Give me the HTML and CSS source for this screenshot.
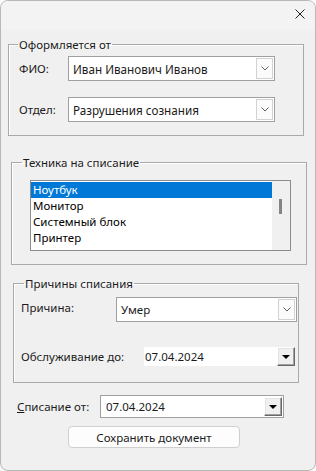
FILE: index.html
```html
<!DOCTYPE html>
<html lang="ru">
  <head>
    <meta charset="utf-8">
    <title>Списание техники</title>
    <link rel="stylesheet" href="styles.css">
  </head>
  <body>
    <div class="window">
      <div class="titlebar">
        <span class="close">
          <svg width="10" height="10" viewBox="0 0 10 10"><path d="M0.5 0.5 L9.5 9.5 M9.5 0.5 L0.5 9.5" stroke="#1f1f1f" stroke-width="1" fill="none"/></svg>
        </span>
      </div>

      <fieldset class="group group-owner">
        <legend>Оформляется от</legend>
        <div class="row">
          <label class="lbl lbl-owner">ФИО:</label>
          <div class="combo combo-owner">
            <span class="combo-text">Иван Иванович Иванов</span>
            <span class="combo-btn"><svg width="8" height="5" viewBox="0 0 8 5"><path d="M0.5 0.5 L4 4 L7.5 0.5" stroke="#606060" fill="none"/></svg></span>
          </div>
        </div>
        <div class="row row-gap">
          <label class="lbl lbl-owner">Отдел:</label>
          <div class="combo combo-owner">
            <span class="combo-text">Разрушения сознания</span>
            <span class="combo-btn"><svg width="8" height="5" viewBox="0 0 8 5"><path d="M0.5 0.5 L4 4 L7.5 0.5" stroke="#606060" fill="none"/></svg></span>
          </div>
        </div>
      </fieldset>

      <fieldset class="group group-items">
        <legend>Техника на списание</legend>
        <div class="listbox">
          <ul class="list">
            <li class="selected">Ноутбук</li>
            <li>Монитор</li>
            <li>Системный блок</li>
            <li>Принтер</li>
          </ul>
          <div class="scroll"><span class="thumb"></span></div>
        </div>
      </fieldset>

      <fieldset class="group group-reason">
        <legend>Причины списания</legend>
        <div class="row row-top">
          <label class="lbl lbl-reason">Причина:</label>
          <div class="combo combo-reason">
            <span class="combo-text">Умер</span>
            <span class="combo-btn"><svg width="8" height="5" viewBox="0 0 8 5"><path d="M0.5 0.5 L4 4 L7.5 0.5" stroke="#606060" fill="none"/></svg></span>
          </div>
        </div>
        <div class="row row-service">
          <label class="lbl lbl-service">Обслуживание до:</label>
          <div class="date date-flat">
            <span class="date-text">07.04.2024</span>
            <span class="date-btn"><span class="tri"></span></span>
          </div>
        </div>
      </fieldset>

      <div class="row row-writeoff">
        <label class="lbl lbl-writeoff"><u>С</u>писание от:</label>
        <div class="date date-boxed">
          <span class="date-text">07.04.2024</span>
          <span class="date-btn"><span class="tri"></span></span>
        </div>
      </div>

      <button class="save">Сохранить <u>д</u>окумент</button>
    </div>
  </body>
</html>
```

FILE: styles.css
```css
html, body {
  margin: 0;
  padding: 0;
}
body {
  background: #fafafa;
  font-family: "Noto Sans", "Liberation Sans", sans-serif;
  font-size: 11.5px;
  color: #1b1b1b;
}
.window {
  box-sizing: border-box;
  width: 316px;
  height: 471px;
  border: 1px solid #b8b8b8;
  border-radius: 8px;
  background: #f0f0f0;
  overflow: hidden;
}
.titlebar {
  height: 29px;
  background: #f3f3f3;
  display: flex;
  justify-content: flex-end;
  align-items: flex-start;
  padding-right: 10px;
}
.close {
  display: block;
  margin-top: 8px;
  height: 10px;
}
.close svg {
  display: block;
}

/* group boxes */
.group {
  box-sizing: border-box;
  margin: 0;
  border: 1px solid #a9a9a9;
  box-shadow: inset 1px 1px #ffffff;
  min-width: 0;
}
.group legend {
  line-height: 17px;
  padding: 0 1px;
  color: #1b1b1b;
}
.group-owner {
  margin: 6px 0 0 7px;
  width: 296px;
  padding: 3px 10px 13px 10px;
}
.group-owner legend {
  margin-left: -1px;
}
.group-items {
  margin: 18px 0 0 10px;
  width: 296px;
  padding: 9px 10px 13px 10px;
}
.group-reason {
  margin: 10px 0 0 12px;
  width: 286px;
  padding: 5px 1px 16px 7px;
}
.group-reason legend {
  margin-left: 3px;
}

.row {
  display: flex;
  align-items: center;
}
.row-gap {
  margin-top: 16px;
}
.row-top {
  align-items: flex-start;
}
.row-service {
  margin-top: 25px;
}
.lbl {
  flex: none;
}
.lbl-owner {
  width: 49px;
}
.lbl-reason {
  width: 95px;
  margin-top: 3px;
}
.lbl-service {
  width: 123px;
}

/* combo boxes */
.combo {
  box-sizing: border-box;
  height: 25px;
  background: #ffffff;
  border: 1px solid #a0a0a0;
  display: flex;
  align-items: center;
  padding: 1px;
}
.combo-owner {
  width: 207px;
  font-size: 11.7px;
}
.combo-reason {
  width: 181px;
}
.combo-text {
  flex: 1;
  padding-left: 3px;
}
.combo-btn {
  box-sizing: border-box;
  width: 17px;
  height: 21px;
  border: 1px solid #d2d2d2;
  background: #fbfbfb;
  display: flex;
  align-items: center;
  justify-content: center;
}
.combo-btn svg {
  display: block;
}

/* list box */
.listbox {
  box-sizing: border-box;
  margin-left: 8px;
  width: 261px;
  height: 71px;
  border: 1px solid #8c8c8c;
  background: #ffffff;
  display: flex;
}
.list {
  flex: 1;
  list-style: none;
  margin: 0;
  padding: 1px 0 0 0;
}
.list li {
  height: 16px;
  line-height: 16px;
  padding-left: 2px;
  color: #000000;
}
.list li.selected {
  background: #0078d7;
  color: #ffffff;
}
.scroll {
  width: 18px;
  background: #f0f0f0;
}
.thumb {
  display: block;
  width: 3px;
  height: 15px;
  margin: 18px 0 0 7px;
  background: #858585;
}

/* date pickers */
.date {
  box-sizing: border-box;
  background: #ffffff;
  display: flex;
  align-items: center;
}
.date-flat {
  width: 151px;
  height: 19px;
}
.date-boxed {
  width: 184px;
  height: 23px;
  border: 1px solid #a0a0a0;
  padding: 1px;
}
.date-text {
  flex: 1;
  padding-left: 1px;
}
.date-boxed .date-text {
  padding-left: 4px;
}
.date-btn {
  box-sizing: border-box;
  width: 18px;
  height: 19px;
  background: #f0f0f0;
  border: 1px solid;
  border-color: #ffffff #696969 #696969 #ffffff;
  box-shadow: inset -1px -1px #a0a0a0, inset 1px 1px #e3e3e3;
  display: flex;
  align-items: center;
  justify-content: center;
}
.tri {
  width: 0;
  height: 0;
  border-left: 4px solid transparent;
  border-right: 4px solid transparent;
  border-top: 4px solid #000000;
}

.row-writeoff {
  margin: 12px 0 0 16px;
}
.lbl-writeoff {
  width: 83px;
}

.save {
  display: block;
  box-sizing: border-box;
  margin: 8px 0 0 67px;
  width: 172px;
  height: 22px;
  padding: 0;
  border: 1px solid #d0d0d0;
  border-radius: 4px;
  background: #fdfdfd;
  font-family: inherit;
  font-size: 11.5px;
  color: #1b1b1b;
}
```
